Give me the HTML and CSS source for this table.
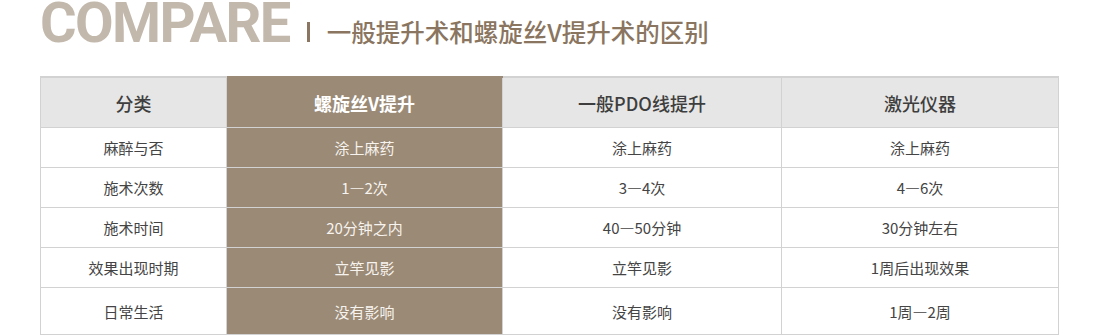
FILE: index.html
```html
<!DOCTYPE html>
<html lang="zh-CN">
<head>
<meta charset="utf-8">
<title>COMPARE</title>
<link rel="stylesheet" href="styles.css">
</head>
<body>
<div class="page">
  <div class="title">
    <span class="title-en">COMPARE</span>
    <span class="title-bar"></span>
    <span class="title-cn">一般提升术和螺旋丝V提升术的区别</span>
  </div>
  <table class="compare">
    <colgroup>
      <col class="c1"><col class="c2"><col class="c3"><col class="c4">
    </colgroup>
    <thead>
      <tr>
        <th>分类</th>
        <th class="hl">螺旋丝V提升</th>
        <th>一般PDO线提升</th>
        <th>激光仪器</th>
      </tr>
    </thead>
    <tbody>
      <tr><td>麻醉与否</td><td class="hl">涂上麻药</td><td>涂上麻药</td><td>涂上麻药</td></tr>
      <tr><td>施术次数</td><td class="hl">1—2次</td><td>3—4次</td><td>4—6次</td></tr>
      <tr><td>施术时间</td><td class="hl">20分钟之内</td><td>40—50分钟</td><td>30分钟左右</td></tr>
      <tr><td>效果出现时期</td><td class="hl">立竿见影</td><td>立竿见影</td><td>1周后出现效果</td></tr>
      <tr class="last"><td>日常生活</td><td class="hl">没有影响</td><td>没有影响</td><td>1周—2周</td></tr>
    </tbody>
  </table>
</div>
</body>
</html>
```
FILE: styles.css
```css
html, body {
  margin: 0;
  padding: 0;
  background: #ffffff;
}

.page {
  padding-left: 40px;
  width: 1018px;
  font-family: "Noto Sans CJK SC", "Noto Sans", sans-serif;
}

.title {
  display: flex;
  align-items: baseline;
  height: 46px;
  margin-bottom: 30px;
}

.title-en {
  font-family: Roboto, "DejaVu Sans", sans-serif;
  font-weight: 700;
  font-size: 56px;
  line-height: 46px;
  letter-spacing: -1.6px;
  color: #c3b8ac;
}

.title-bar {
  display: inline-block;
  width: 3px;
  height: 20px;
  background: #8b7761;
  margin-left: 17px;
  margin-right: 17px;
}

.title-cn {
  font-size: 24.5px;
  line-height: 30px;
  color: #8a7560;
  font-weight: 500;
}

.compare {
  border-collapse: collapse;
  width: 1018px;
  table-layout: fixed;
}

.c1 { width: 186px; }
.c2 { width: 276px; }
.c3 { width: 279px; }
.c4 { width: 277px; }

.compare th,
.compare td {
  border: 1px solid #d2d2d2;
  text-align: center;
  padding: 0;
}

.compare th {
  height: 49px;
  background: #e6e6e6;
  color: #3e3e3e;
  font-size: 18px;
  font-weight: 500;
  border-top: 2px solid #d2d2d2;
}

.compare td {
  height: 39px;
  font-size: 15px;
  color: #444444;
}

.compare .last td {
  height: 46px;
}

.compare th.hl {
  background: #9b8a76;
  color: #ffffff;
  font-weight: 700;
  border-top-color: #9b8a76;
}

.compare td.hl {
  background: #9b8a76;
  color: #f7f3ee;
  border-top-color: #d6cdc3;
}
```
